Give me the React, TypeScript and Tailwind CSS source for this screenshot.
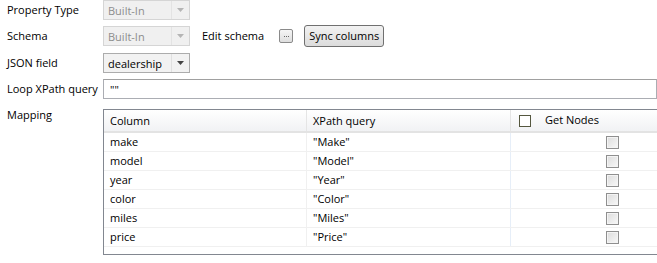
import React from "react";

const font = { fontFamily: '"Segoe UI", "Open Sans", sans-serif' };

function Combo({ value, disabled }: { value: string; disabled?: boolean }) {
  return (
    <div
      className={`flex h-[20px] w-[87px] items-center border ${
        disabled ? "border-[#d5d5d5] bg-[#f0f0f0] text-[#8d8d8d]" : "border-[#acacac] bg-[#f2f2f2] text-black"
      }`}
    >
      <span className="flex-1 pl-[4px] leading-none">{value}</span>
      <span className={`flex h-full w-[18px] items-center justify-center border-l ${disabled ? "border-[#e3e3e3]" : "border-[#e0e0e0]"}`}>
        <svg width="7" height="4" viewBox="0 0 7 4">
          <path d="M0 0h7L3.5 4z" fill={disabled ? "#b5b5b5" : "#444"} />
        </svg>
      </span>
    </div>
  );
}

function Check() {
  return (
    <span className="inline-block h-[13px] w-[13px] border border-[#8f8f8f] bg-gradient-to-br from-[#dcdcdc] to-[#f8f8f8] shadow-[inset_0_0_0_1px_#f4f4f4]" />
  );
}

const rows = [
  ["make", '"Make"'],
  ["model", '"Model"'],
  ["year", '"Year"'],
  ["color", '"Color"'],
  ["miles", '"Miles"'],
  ["price", '"Price"'],
];

export default function App() {
  return (
    <div className="h-[263px] w-[657px] overflow-hidden whitespace-nowrap bg-white text-[11px] text-black" style={font}>
      <div className="flex h-[20px] items-center">
        <div className="w-[103px] pl-[7px]">Property Type</div>
        <Combo value="Built-In" disabled />
      </div>
      <div className="mt-[5px] flex h-[22px] items-center">
        <div className="w-[103px] pl-[7px]">Schema</div>
        <Combo value="Built-In" disabled />
        <span className="ml-[12px]">Edit schema</span>
        <span className="ml-[15px] flex h-[14px] w-[14px] items-center justify-center gap-[1px] rounded-[2px] border border-[#8a8a8a] bg-gradient-to-b from-[#f5f5f5] to-[#dedede]">
          <span className="h-[1px] w-[1px] bg-[#666]" />
          <span className="h-[1px] w-[1px] bg-[#666]" />
          <span className="h-[1px] w-[1px] bg-[#666]" />
        </span>
        <span className="ml-[11px] flex h-[22px] w-[80px] items-center justify-center rounded-[3px] border border-[#707070] bg-gradient-to-b from-[#f2f2f2] to-[#dcdcdc]">
          Sync columns
        </span>
      </div>
      <div className="mt-[6px] flex h-[20px] items-center">
        <div className="w-[103px] pl-[7px]">JSON field</div>
        <Combo value="dealership" />
      </div>
      <div className="mt-[6px] flex h-[20px] items-center">
        <div className="w-[103px] pl-[7px]">Loop XPath query</div>
        <div className="flex h-[20px] flex-1 items-center border border-[#abadb3] border-t-[#a0a0a0] pl-[6px] leading-none">""</div>
      </div>
      <div className="mt-[10px] flex">
        <div className="w-[103px] pl-[7px] leading-[12px]">Mapping</div>
        <div className="h-[146px] flex-1 border border-[#828790] border-r-0">
          <div className="flex h-[23px] border-b-2 border-[#e3e3e3] bg-gradient-to-b from-white to-[#f1f2f4]">
            <div className="flex w-[203px] items-end border-r border-[#e5e5e5] pb-[2px] pl-[6px]">Column</div>
            <div className="flex w-[204px] items-end border-r border-[#e5e5e5] pb-[2px] pl-[6px]">XPath query</div>
            <div className="flex flex-1 items-end pb-[3px] pl-[8px]">
              <span className="mb-[1px] inline-block h-[12px] w-[12px] border border-[#55573f] bg-white" />
              <span className="ml-[14px]">Get Nodes</span>
            </div>
          </div>
          {rows.map(([c, x]) => (
            <div key={c} className="flex h-[19px] border-b border-[#f0f0f0]">
              <div className="flex w-[203px] items-center border-r border-[#f0f0f0] pl-[6px]">{c}</div>
              <div className="flex w-[204px] items-center border-r border-[#e6eef8] pl-[6px]">{x}</div>
              <div className="flex flex-1 items-center pl-[95px]">
                <Check />
              </div>
            </div>
          ))}
        </div>
      </div>
    </div>
  );
}
